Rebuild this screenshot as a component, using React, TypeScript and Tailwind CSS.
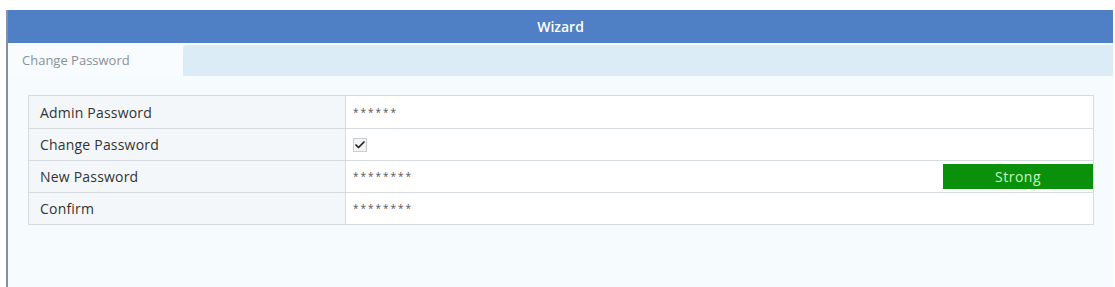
import { Check } from "lucide-react";

const rows = [
  { label: "Admin Password", value: "******" },
  { label: "Change Password", check: true },
  { label: "New Password", value: "********", strength: "Strong" },
  { label: "Confirm", value: "********" },
];

export default function App() {
  return (
    <div className="w-[1115px] h-[287px] bg-white pt-[10px] font-['Open_Sans',sans-serif] overflow-hidden">
      <div className="ml-[6px] w-[1107px] h-[277px] border-l-2 border-[#8a9099] bg-[#f6fbfd] flex flex-col">
        <div className="h-[33px] bg-[#4f80c6] flex items-center justify-center text-white text-[14px] font-semibold">
          Wizard
        </div>
        <div className="h-[33px] flex bg-[#f6fbfd]">
          <div className="w-[175px] bg-[#f8fcfe] flex items-center pl-[14px] pt-[2px] text-[13px] text-[#8a9096]">
            Change Password
          </div>
          <div className="flex-1 mt-[2px] bg-[#dcecf6] rounded-tl-[4px]" />
        </div>
        <div className="mt-[19px] ml-[20px] w-[1066px] border border-[#d6dbdf]">
          {rows.map((r, i) => (
            <div
              key={r.label}
              className={`flex h-[32px] ${i > 0 ? "border-t border-[#d6dbdf]" : ""}`}
            >
              <div className="w-[317px] bg-[#f3f7fa] border-r border-[#d6dbdf] flex items-center pl-[11px] text-[14px] text-[#333] tracking-[0.2px]">
                {r.label}
              </div>
              <div className="flex-1 bg-white flex items-center pl-[7px]">
                {r.check ? (
                  <span className="w-[14px] h-[14px] border border-[#c8cdd1] bg-[#f4f4f4] flex items-center justify-center">
                    <Check size={12} strokeWidth={3.5} className="text-[#222]" />
                  </span>
                ) : (
                  <span className="text-[10px] text-[#555] tracking-[2px]">{r.value}</span>
                )}
                {r.strength && (
                  <div className="ml-auto w-[150px] h-[25px] bg-[#0b900b] flex items-center justify-center text-[14px] font-medium text-[#c8f5c0] tracking-[0.5px]">
                    {r.strength}
                  </div>
                )}
              </div>
            </div>
          ))}
        </div>
      </div>
    </div>
  );
}
